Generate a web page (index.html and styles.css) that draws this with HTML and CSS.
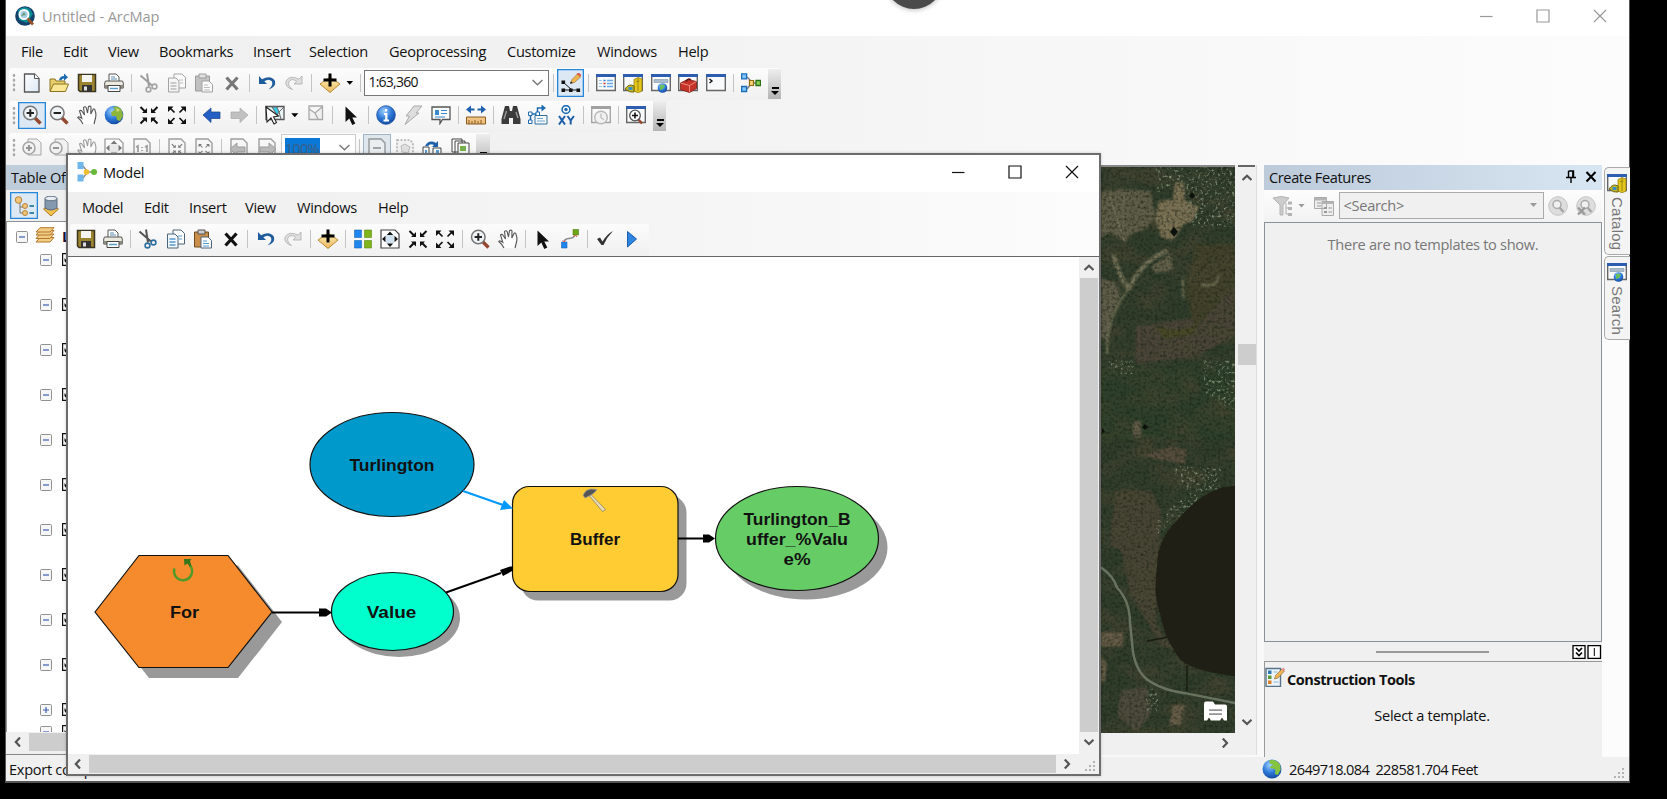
FILE: index.html
```html
<!DOCTYPE html>
<html lang="en">
<head>
<meta charset="utf-8">
<title>Untitled - ArcMap</title>
<link rel="stylesheet" href="styles.css">
</head>
<body>
<svg class="defs" width="0" height="0">
<defs>
<linearGradient id="gGold" x1="0" y1="0" x2="0" y2="1"><stop offset="0" stop-color="#fff0b8"/><stop offset="1" stop-color="#e8b85c"/></linearGradient>
<radialGradient id="gBlue" cx=".4" cy=".3" r=".8"><stop offset="0" stop-color="#9fd0ff"/><stop offset=".5" stop-color="#2d79d8"/><stop offset="1" stop-color="#0d3f93"/></radialGradient>
<linearGradient id="gSheet" x1="0" y1="0" x2="1" y2="1"><stop offset="0" stop-color="#fff"/><stop offset="1" stop-color="#dbe8f4"/></linearGradient>
<filter id="terrain" x="0" y="0" width="100%" height="100%" color-interpolation-filters="sRGB"><feTurbulence type="fractalNoise" baseFrequency=".03 .05" numOctaves="5" seed="8"/><feColorMatrix values="0 0 0 0 .29  0 0 0 0 .28  0 0 0 0 .20  2 1.200 0 0 -1.350"/></filter>
<filter id="grain" x="0" y="0" width="100%" height="100%" color-interpolation-filters="sRGB"><feTurbulence type="fractalNoise" baseFrequency=".35" numOctaves="3" seed="3"/><feColorMatrix values="0 0 0 0 .08  0 0 0 0 .12  0 0 0 0 .07  0 2 0 0 -.85"/></filter>
<filter id="specks" x="0" y="0" width="100%" height="100%" color-interpolation-filters="sRGB"><feTurbulence type="fractalNoise" baseFrequency=".35" numOctaves="2" seed="5"/><feColorMatrix values="0 0 0 0 .52  0 0 0 0 .57  0 0 0 0 .47  4 0 0 0 -2.200"/><feComposite in2="SourceGraphic" operator="in"/></filter>
<filter id="soft"><feGaussianBlur stdDeviation="1.2"/></filter>

<symbol id="new" viewBox="0 0 20 20"><path d="M2.500 1h10l4.500 4.500V19H2.500z" fill="url(#gSheet)" stroke="#555" stroke-width="1.300"/><path d="M12.500 1v4.500H17" fill="#fff" stroke="#555"/></symbol>
<symbol id="open" viewBox="0 0 20 20"><path d="M1 18V6h5l1 2h9v3" fill="#e8cf6a" stroke="#8a7420"/><path d="M1 18.500 4.500 11H19.500l-3 7.500z" fill="#fbe694" stroke="#8a7420"/><path d="M10 7q1-4 5-4V.5l4 3.700-4 3.500V5.500q-2 0-3 2z" fill="#1d6bb0"/></symbol>
<symbol id="save" viewBox="0 0 20 20"><path d="M1.500 1.500h17v17H3l-1.500-1.500z" fill="#9b8430" stroke="#3c3520" stroke-width="1.500"/><path d="M5 2h10v7H5z" fill="#f4f4f0"/><path d="M5 12h10v6.500H5z" fill="#333"/><path d="M7 13.500h3v4H7z" fill="#ddd"/></symbol>
<symbol id="print" viewBox="0 0 20 20"><path d="M5 8V1h7l3 3v4" fill="#fff" stroke="#555"/><path d="M7 4h4M7 6h6" stroke="#5a8cb4"/><path d="M1.500 8h17l.8 2v5H.7v-5z" fill="#ece9de" stroke="#555"/><path d="M.7 12h18.600v3.500H.7z" fill="#8c8a80"/><path d="M4 12.500h12v6H4z" fill="#fff" stroke="#444"/><path d="M6 15.500h8" stroke="#5a9bc9" stroke-width="1.500"/></symbol>
<symbol id="cut" viewBox="0 0 20 20"><path d="M1.500 2.500 13 12.500M8 .5l2 13" stroke="#555" stroke-width="2" fill="none"/><circle cx="9.500" cy="16.500" r="2.400" fill="none" stroke="#2d6f9f" stroke-width="1.600"/><circle cx="15.500" cy="13.500" r="2.400" fill="none" stroke="#2d6f9f" stroke-width="1.600"/></symbol>
<symbol id="copy" viewBox="0 0 20 20"><path d="M7 1h8l3.500 3.500V15H7z" fill="#fff" stroke="#4c6478"/><path d="M1.500 5H9l3 3v11H1.500z" fill="#f1f7fc" stroke="#4c6478"/><path d="M3.500 10h6M3.500 13h6M3.500 16h6" stroke="#5799cf" stroke-width="1.500"/><path d="M12 7h4M13 10h3" stroke="#5799cf"/></symbol>
<symbol id="paste" viewBox="0 0 20 20"><path d="M1.500 3h14v15h-14z" fill="#c98f4a" stroke="#6e4a1c"/><path d="M5 1h7v4H5z" fill="#ccc" stroke="#555"/><path d="M8 8h7l3.500 3.500V19H8z" fill="#fff" stroke="#4c6478"/><path d="M10 12h4M10 14.500h6M10 17h6" stroke="#5799cf"/></symbol>
<symbol id="del" viewBox="0 0 20 20"><path d="M4.500 4.500l11 12M15.500 4.500l-11 12" stroke="#111" stroke-width="3.200"/></symbol>
<symbol id="undo" viewBox="0 0 20 20"><path d="M2 3v8h8L7.300 8.300q4.500-3.300 7.500 0 2.200 4-3.300 8.200 8-2.500 6.500-8.500-4-6.500-13-1.800z" fill="#1e5c9c"/></symbol>
<symbol id="redo" viewBox="0 0 20 20"><g transform="matrix(-1 0 0 1 20 0)"><path d="M2 3v8h8L7.300 8.300q4.500-3.300 7.500 0 2.200 4-3.300 8.200 8-2.500 6.500-8.500-4-6.500-13-1.800z" fill="#d4d4d4" stroke="#999" stroke-width=".9"/></g></symbol>
<symbol id="add" viewBox="0 0 20 20"><path d="M0 11 10 4l10 7-10 8.500z" fill="url(#gGold)" stroke="#b98a34"/><path d="M10 .5v13M3.500 7h13" stroke="#000" stroke-width="3"/></symbol>
<symbol id="edit" viewBox="0 0 20 20"><path d="M2.500 9.500 11 17H3M11 17h7" fill="none" stroke="#111"/><path d="M.5 7.500h3.600v3.600H.5zM.5 15.500h3.600v3.600H.5zM8 15.500h3.600v3.600H8zM15.500 15.500h3.600v3.600h-3.600z" fill="#111"/><path d="M9.500 10l1.500-3.500 6-6L20 3.500l-6.500 6z" fill="#f0b64e" stroke="#8d6a30" stroke-width=".6"/><path d="m15.500 1 1.800-1.800L20.500 2l-1.700 1.800z" fill="#d75f50"/><path d="m9 11 1-2.800 1.800 1.800z" fill="#222"/></symbol>
<symbol id="win" viewBox="0 0 20 20"><path d="M.7 2h18.600v15.500H.7z" fill="#f8fafc" stroke="#666" stroke-width="1.400"/><path d="M0 1h20v3H0z" fill="#2c5db0"/></symbol>
<symbol id="toc" viewBox="0 0 20 20"><use href="#win"/><path d="M3 7.500h3M3 10.500h3M3 13.500h3" stroke="#9cc5ec"/><path d="M7.500 7.500h2M7.500 13.500h2" stroke="#2c78d0" stroke-width="1.500"/><path d="M11 7.500h6M11 10.500h6M11 13.500h6" stroke="#68a9e6" stroke-width="1.500"/><path d="M7.500 10.500h2" stroke="#d33" stroke-width="1.500"/></symbol>
<symbol id="catalog" viewBox="0 0 20 20"><use href="#win"/><path d="M11 6.500l4-2 4 1.500v12l-4 1.800-4-1.800z" fill="#e3c51c" stroke="#8a760a" stroke-width=".7"/><path d="M13 8.500l3.500-.5M15 5v13" stroke="#8e7a0c" stroke-width=".8"/><path d="M2 16q4-6 9-3v6q-4 1-9-3z" fill="#c6ba20" stroke="#6d6513"/><path d="M5.500 14h4v3h-4z" fill="#368dc9"/></symbol>
<symbol id="searchw" viewBox="0 0 20 20"><use href="#win"/><path d="M3 6.500h14v3H3z" fill="#a9bccb" stroke="#8496a4" stroke-width=".6"/><circle cx="11.500" cy="15" r="4.800" fill="url(#gBlue)"/><path d="M9 12q4-1 5 1l-2 3-3 1z" fill="#67bf5c"/></symbol>
<symbol id="toolbox" viewBox="0 0 20 20"><use href="#win"/><path d="m2.500 10 7-3.500 9 2v7l-7 4-9-3z" fill="#c53328" stroke="#7c1a12" stroke-width=".8"/><path d="m2.500 10 9 2.500 7-4M11.500 12.500V19" fill="none" stroke="#f08a7e"/><path d="M8 8.500q2-4 5-1.500" fill="none" stroke="#5b1410" stroke-width="1.500"/></symbol>
<symbol id="python" viewBox="0 0 20 20"><use href="#win"/><path d="m3.500 6 2.500 2-2.500 2" fill="none" stroke="#111" stroke-width="1.400"/></symbol>
<symbol id="model" viewBox="0 0 20 20"><path d="M6 4l4 4M6 16l4-5M13 10h3" stroke="#777" stroke-width="1.300"/><path d="M.6.900h5v5h-5zM.6 13.500h5v5h-5z" fill="#7fc4fa" stroke="#1c6cb8" stroke-width="1.300"/><path d="M8.500 7.500h4v5h-4z" fill="#f6d77a" stroke="#8f6c10" stroke-width="1.200"/><path d="M15 7.500h4.500v5H15z" fill="#8bd15c" stroke="#2b7018" stroke-width="1.300"/></symbol>
<symbol id="modelr" viewBox="0 0 20 20"><path d="M6 4l4 5M6 16l4-5M12 10h4" stroke="#888" stroke-width="1.300"/><path d="M.5 0h6v7h-6zM.5 12.500h6v7h-6z" fill="#6fb6ea"/><circle cx="9.500" cy="10" r="2.800" fill="#f0c02e"/><circle cx="17" cy="10" r="3" fill="#69b83c"/></symbol>
<symbol id="zin" viewBox="0 0 20 20"><path d="m13 13 5.500 5.500" stroke="#94472e" stroke-width="3.400"/><circle cx="8.300" cy="8" r="6.800" fill="#f1f4f6" stroke="#777" stroke-width="1.500"/><path d="M8.300 4.300v7.400M4.600 8H12" stroke="#222" stroke-width="2"/></symbol>
<symbol id="zout" viewBox="0 0 20 20"><path d="m13 13 5.500 5.500" stroke="#94472e" stroke-width="3.400"/><circle cx="8.300" cy="8" r="6.800" fill="#f1f4f6" stroke="#777" stroke-width="1.500"/><path d="M4.600 8H12" stroke="#222" stroke-width="2"/></symbol>
<symbol id="hand" viewBox="0 0 20 20"><path d="M6 19Q4 15 .8 12.500q1-1.500 4 .8L2.500 6q1.500-1.500 2.700.5L7.500 10 6.500 2.500Q8 .8 9.200 2.700L10.500 8l1-6.500q1.800-1 2.500.5L13.800 9l2.500-5q1.800-.4 1.700 1.500Q19.500 9 18.500 13l-1.500 6" fill="#fff" stroke="#555" stroke-width="1.100"/></symbol>
<symbol id="globe" viewBox="0 0 20 20"><circle cx="10" cy="10" r="9.300" fill="url(#gBlue)"/><path d="M9 2q6-2 9 4l1 5-3 5-3-1-1-4-4 0-1-4 4-2z" fill="#8db63a"/><path d="m12 3 4 2-3 2z" fill="#d6dd7e"/></symbol>
<symbol id="globe2" viewBox="0 0 20 20"><circle cx="10" cy="10" r="9.500" fill="url(#gBlue)"/><path d="M7 1.500q7-2 11 4l.8 5-3 5.500-3-1q1-3 0-5l-5-1 1-2 3-1-4-1.500z" fill="#86c440"/></symbol>
<symbol id="shrink" viewBox="0 0 20 20"><path d="M1.500 2 6 6.500M18.500 2 14 6.500M1.500 18.500 6 14M18.500 18.500 14 14" stroke="#111" stroke-width="2"/><path d="M8 8H3l5-5zM12 8h5l-5-5zM8 12.500H3l5 5zM12 12.500h5l-5 5z" fill="#111"/></symbol>
<symbol id="grow" viewBox="0 0 20 20"><path d="m3 3 4.500 4.500M17 3l-4.500 4.500M3 17.500 7.500 13M17 17.500 12.500 13" stroke="#111" stroke-width="1.700"/><path d="M1 1.500h5.500L1 7zM19 1.500h-5.500L19 7zM1 19h5.500L1 13.500zM19 19h-5.500l5.500-5.500z" fill="#111"/></symbol>
<symbol id="back" viewBox="0 0 20 20"><path d="m1 10 8-7v4h9v6.500H9v4z" fill="#2460c4" stroke="#17408a" stroke-width=".7"/></symbol>
<symbol id="fwd" viewBox="0 0 20 20"><path d="m19 10-8-7v4H2v6.500h9v4z" fill="#aaa" stroke="#888" stroke-width=".7"/></symbol>
<symbol id="selfeat" viewBox="0 0 20 20"><path d="M1 1.500h18v13H1z" fill="#eaf4f6" stroke="#555" stroke-width="1.300"/><path d="M7 2h5l2 5-2 3z" fill="#37cbe9" stroke="#666"/><path d="M19 2l-5 5 2 7" fill="none" stroke="#666"/><path d="m1 2 1 15 4-4 3 6 2.500-1.500-3-5.500 5-1z" fill="#fff" stroke="#222" stroke-width="1.100"/></symbol>
<symbol id="clear" viewBox="0 0 20 20"><path d="M3 1h13.500v13.500H3zM3 4l6 4 7-6M9 8l3 6" fill="#eee" stroke="#888" stroke-width="1.300"/></symbol>
<symbol id="cursor" viewBox="0 0 20 20"><path d="M4.500 1.500v15.500l3.800-3.500 3 6.500 3-1.500-3-6H16z" fill="#111"/></symbol>
<symbol id="info" viewBox="0 0 20 20"><circle cx="10" cy="10" r="9.300" fill="url(#gBlue)" stroke="#1c4f9f" stroke-width=".8"/><path d="M10 4v2.600M8 9h2.300v6.500M7.500 15.500h5.500" stroke="#fff" stroke-width="2.200" fill="none"/></symbol>
<symbol id="bolt" viewBox="0 0 20 20"><path d="M11 1h8l-6 7h3L2 19.500 6.500 11H3z" fill="#ddd" stroke="#aaa"/></symbol>
<symbol id="popup" viewBox="0 0 20 20"><path d="M1 2h18v12.500h-7.500L9 18.500v-4H1z" fill="#f7fbfe" stroke="#555" stroke-width="1.300"/><path d="M4 5h4v5H4z" fill="#3988d0"/><path d="M10 5.500h6M10 8.500h6M4 12h10" stroke="#3988d0"/></symbol>
<symbol id="measure" viewBox="0 0 20 20"><path d="m0 4.500 5-4v3h3.500v2H5v3zM20 4.500l-5-4v3h-3.500v2H15v3z" fill="#1d5fa8"/><path d="M.5 12h19v7H.5z" fill="#efc27f" stroke="#8a5a22"/><path d="M3 15v4M6 16v3M9 15v4M12 16v3M15 15v4" stroke="#8a5a22"/></symbol>
<symbol id="find" viewBox="0 0 20 20"><path d="M4 1h4l1 5h2l1-5h4l3.500 13v5H12v-6H8v6H.5v-5z" fill="#3b3b3b"/><path d="M3 14l2.500-8M15 7l2 6" stroke="#999" stroke-width="1.400"/></symbol>
<symbol id="route" viewBox="0 0 20 20"><path d="M2.500 17V9h7V3h6" fill="none" stroke="#1d6bb0" stroke-width="1.500"/><path d="m13.500-.5 4.500 3.500-4.500 3.500z" fill="#1d6bb0"/><path d="M.5 7h3.500v3.500H.5zM.5 15H4v3.500H.5zM8 7h3.500v3.500H8z" fill="#fff" stroke="#1d6bb0"/><path d="M7 10.500h12V19H7z" fill="#f5f9fc" stroke="#2d6f9f"/><path d="M9 13.500h6M9 16h8" stroke="#6ea4cb"/></symbol>
<symbol id="xy" viewBox="0 0 20 20"><circle cx="10" cy="4.500" r="3.900" fill="#fff" stroke="#1d6bb0" stroke-width="1.600"/><circle cx="10" cy="4.500" r="1.700" fill="#1d6bb0"/><path d="m3 11 6 8.500M9 11l-6 8.500M11.500 11l3.200 4.500 3.200-4.500M14.700 15v4.500" stroke="#1d5fa8" stroke-width="2" fill="none"/></symbol>
<symbol id="time" viewBox="0 0 20 20"><use href="#win"/><circle cx="10" cy="12.500" r="6.300" fill="#eee" stroke="#888" stroke-width="1.400"/><path d="M10 8.500v4.500l3 1.500" stroke="#777" fill="none"/></symbol>
<symbol id="viewer" viewBox="0 0 20 20"><use href="#win"/><path d="m12 14 4 4.500" stroke="#94472e" stroke-width="2.600"/><circle cx="9" cy="10.500" r="5.300" fill="#fff" stroke="#555" stroke-width="1.300"/><path d="M9 7.500v6M6 10.500h6" stroke="#111" stroke-width="1.600"/></symbol>
<symbol id="pzoom" viewBox="0 0 20 20"><path d="M6 1h9l4 4v12H6z" fill="#eee" stroke="#666"/><circle cx="7" cy="10" r="6" fill="#eee" stroke="#666" stroke-width="1.600"/><path d="M7 7v6M4 10h6" stroke="#444" stroke-width="2"/></symbol>
<symbol id="pzoomo" viewBox="0 0 20 20"><path d="M6 1h9l4 4v12H6z" fill="#eee" stroke="#666"/><circle cx="7" cy="10" r="6" fill="#eee" stroke="#666" stroke-width="1.600"/><path d="M4 10h6" stroke="#444" stroke-width="2"/></symbol>
<symbol id="page" viewBox="0 0 20 20"><path d="M2 1h12l4 4v14H2z" fill="#f6f6f6" stroke="#555" stroke-width="1.400"/></symbol>
<symbol id="pageall" viewBox="0 0 20 20"><path d="M1 1h14l4 4v14H1z" fill="#fff" stroke="#444" stroke-width="1.200"/><path d="M6 6h8v8H6z" fill="#cfe2ef"/><path d="m10 2.500 3.200 3.500H6.800zM10 18 6.800 14.500h6.400zM2 10l3.500-3.200v6.400zM18 10l-3.500-3.200v6.400z" fill="#111"/></symbol>
<symbol id="p11" viewBox="0 0 20 20"><use href="#page"/><path d="M4 9l2-1v6M10 9v1M10 12v1M13 9l2-1v6" fill="none" stroke="#555" stroke-width="1.700"/></symbol>
<symbol id="pshrink" viewBox="0 0 20 20"><use href="#page"/><use href="#shrink" x="4" y="5" width="12" height="12"/></symbol>
<symbol id="pgrow" viewBox="0 0 20 20"><use href="#page"/><use href="#grow" x="4" y="5" width="12" height="12"/></symbol>
<symbol id="pback" viewBox="0 0 20 20"><use href="#page"/><path d="m1 11 7-6v4h8v5H8v4z" fill="#888" stroke="#555"/></symbol>
<symbol id="pfwd" viewBox="0 0 20 20"><use href="#page"/><path d="m19 11-7-6v4H3v5h9v4z" fill="#888" stroke="#555"/></symbol>
<symbol id="pdraft" viewBox="0 0 20 20"><use href="#page"/><path d="M6 10h8" stroke="#555" stroke-width="1.700"/></symbol>
<symbol id="pfocus" viewBox="0 0 20 20"><path d="M2 2h13l3 3v14H2z" fill="#eee" stroke="#777" stroke-width="1.600" stroke-dasharray="2 1.500"/><path d="m6 8 4-2 5 3-2 6-6-1z" fill="#ccc" stroke="#888"/></symbol>
<symbol id="pchange" viewBox="0 0 20 20"><path d="M3 8q4-7 11-3l2-2v6h-6l2-2q-4-2-6 1z" fill="#1d5fa8"/><path d="M1 9h6v11H1zM11 10h8v10h-8z" fill="#f5f9fc" stroke="#444"/><path d="M3 12h2v7H3zM14 12h3v7h-3z" fill="#5799cf"/></symbol>
<symbol id="pages" viewBox="0 0 20 20"><path d="M2 1h10v13H2zM5 3h10v13H5z" fill="#fff" stroke="#444"/><path d="M8 5h11v12H8z" fill="#f5f9fc" stroke="#444"/><path d="M10 8h6v5h-6z" fill="#77b04a"/><path d="M1 17h12v3H1z" fill="#333"/></symbol>
<symbol id="grid" viewBox="0 0 20 20"><path d="M1.500 1h7v7.500h-7zM1.500 11.500h7V19h-7z" fill="#1f86ee" stroke="#1767b8" stroke-width=".6"/><path d="M11.500 1h7v7.500h-7zM11.500 11.500h7V19h-7z" fill="#7fb51b" stroke="#5d8a10" stroke-width=".6"/></symbol>
<symbol id="connect" viewBox="0 0 20 20"><path d="M4 13q0-3 5-3.500t6-3.500" fill="none" stroke="#888" stroke-width="1.300"/><path d="M1.500 13h5.500v6H1.500z" fill="#1f86ee" stroke="#1767b8" stroke-width=".6"/><path d="M13 .5h5.500v5.500H13z" fill="#6ca716" stroke="#4d7c0b" stroke-width=".6"/><path d="M2.500 11.500 4 13l1.500-1.500M13.500 7.500l2-1.500 1.500 2" fill="none" stroke="#e8574c"/></symbol>
<symbol id="check" viewBox="0 0 20 20"><path d="m2 10 3-1.500 2.500 4Q12 5 18 2 12 8 8.500 16H6.500z" fill="#333"/></symbol>
<symbol id="play" viewBox="0 0 20 20"><path d="M5.500 2.500 14.500 10 5.500 18z" fill="#2f86e0" stroke="#1a5cae"/></symbol>
<symbol id="arc" viewBox="0 0 20 20"><circle cx="10" cy="10" r="9.800" fill="#15406a"/><path d="M3 4q6-5 12-1l3 5-6 9-8-3z" fill="#0a8a92"/><circle cx="9" cy="8.500" r="4.600" fill="#a9d0e4" stroke="#fff" stroke-width="1.800"/><path d="m12.500 12.500 5.500 6" stroke="#9b5324" stroke-width="2.600"/><path d="m6 10 3-4 2 3z" fill="#6a9f7a"/></symbol>
<symbol id="source" viewBox="0 0 20 20"><path d="M6 6v11h5M6 11h4" fill="none" stroke="#777"/><circle cx="4.500" cy="4" r="3.300" fill="#f2c479" stroke="#b58436"/><circle cx="11" cy="10" r="2.500" fill="#f2c479" stroke="#b58436"/><circle cx="11" cy="17" r="2.500" fill="#f2c479" stroke="#b58436"/><path d="M15.500 10h4.500M15.500 17h4.500" stroke="#3a87a8" stroke-width="2"/></symbol>
<symbol id="cyl" viewBox="0 0 20 20"><path d="m2.500 13 7.500-2 7.500 2-7.500 7z" fill="#f2c04d" stroke="#a97820"/><path d="M4 2.500v9.500q6 4 12 0V2.500z" fill="#8499b0" stroke="#5b6b7c"/><ellipse cx="10" cy="2.500" rx="6" ry="2.300" fill="#e7edf3" stroke="#5b6b7c"/></symbol>
<symbol id="layers" viewBox="0 0 20 16"><g fill="#f3cc83" stroke="#b0782d"><path d="M1 15 5 10.500h14L15 15z"/><path d="M1 11.500 5 7h14l-4 4.500z"/><path d="M1 8 5 3.500h14L15 8z"/><path d="M1 5 5 .7h14L15 5z"/></g></symbol>
<symbol id="funnel" viewBox="0 0 20 20"><path d="M0 2q8-3 16 0l-6 7v10H7V9z" fill="#ccc" stroke="#b4b4b4"/><path d="M13 7v11h2M13 12h2" stroke="#aaa" fill="none"/><path d="M15 5.500h4v3h-4zM15 11h4v3h-4zM15 17h4v3h-4z" fill="#b4b4b4"/></symbol>
<symbol id="tmpl" viewBox="0 0 20 20"><path d="M.5 1.500h12v11H.5zM8 5.500h11.500v14H8z" fill="#eee" stroke="#aaa"/><path d="M.5 2h12v2.500H.5zM8 6h11.500v2H8z" fill="#b4b4b4"/><path d="M10 11h3v2h-3zM10 15h3v2h-3z" fill="#999"/><path d="M14.500 12H18M14.500 16H18M3 7h4M3 10h4" stroke="#999"/></symbol>
<symbol id="rsearch" viewBox="0 0 20 20"><circle cx="10" cy="10" r="9.300" fill="#ddd" stroke="#c4c4c4"/><circle cx="9" cy="8.500" r="4" fill="#f0f0f0" stroke="#aaa" stroke-width="1.500"/><path d="m11.500 11.500 4 4.500" stroke="#a4a4a4" stroke-width="2.400"/></symbol>
<symbol id="rclear" viewBox="0 0 20 20"><use href="#rsearch"/><path d="m2 11.500 7 7M9 11.500l-7 7" stroke="#999" stroke-width="2.400"/></symbol>
<symbol id="ctools" viewBox="0 0 20 20"><path d="M1 1.500h14.500v18H1z" fill="#eef5fa" stroke="#567389" stroke-width="1.400"/><path d="M3 3.500h3.500V7H3z" fill="#2e79b8"/><path d="M3 8.500h3.500V12H3z" fill="#5b9a36"/><path d="M3 13.500h3.500V17H3z" fill="#d98028"/><path d="M8.500 5h4M8.500 15h5" stroke="#8fb8d6"/><path d="m9.500 12 1-3.500L17 2l2.500 2-6.500 7z" fill="#efb552" stroke="#856128" stroke-width=".6"/><path d="M16.500 2.500 18.500.500 20 2.500l-1.500 2z" fill="#e28c8c"/></symbol>
<symbol id="up" viewBox="0 0 10 10"><path d="M.5 7 5 2.800 9.500 7" fill="none" stroke="#555" stroke-width="2.200"/></symbol>
<symbol id="down" viewBox="0 0 10 10"><path d="M.5 2.800 5 7l4.500-4.200" fill="none" stroke="#555" stroke-width="2.200"/></symbol>
<symbol id="thin" viewBox="0 0 10 10"><path d="M.5 2.800 5 7l4.500-4.200" fill="none" stroke="#777" stroke-width="1.300"/></symbol>
<symbol id="left" viewBox="0 0 10 10"><path d="M7 .5 2.800 5 7 9.500" fill="none" stroke="#555" stroke-width="2.200"/></symbol>
<symbol id="right" viewBox="0 0 10 10"><path d="M2.800.5 7 5 2.800 9.500" fill="none" stroke="#555" stroke-width="2.200"/></symbol>
<symbol id="wmin" viewBox="0 0 14 14"><path d="M1 7.500h12.500" stroke="currentColor" stroke-width="1.200"/></symbol>
<symbol id="wmax" viewBox="0 0 14 14"><path d="M1 1h12v12H1z" fill="none" stroke="currentColor" stroke-width="1.200"/></symbol>
<symbol id="wclose" viewBox="0 0 14 14"><path d="m1 1 12 12M13 1 1 13" stroke="currentColor" stroke-width="1.200"/></symbol>
<symbol id="size" viewBox="0 0 11 11"><path d="M8 0h2v2H8zM4 4h2v2H4zM8 4h2v2H8zM0 8h2v2H0zM4 8h2v2H4zM8 8h2v2H8z" fill="#b4b4b4"/></symbol>
<symbol id="boxminus" viewBox="0 0 12 12"><rect x=".5" y=".5" width="11" height="11" rx="1" fill="#f6f6f6" stroke="#919191"/><path d="M3 6h6" stroke="#3f5fb5" stroke-width="1.200"/></symbol>
<symbol id="boxplus" viewBox="0 0 12 12"><rect x=".5" y=".5" width="11" height="11" rx="1" fill="#f6f6f6" stroke="#919191"/><path d="M3 6h6M6 3v6" stroke="#3f5fb5" stroke-width="1.200"/></symbol>
<symbol id="tick" viewBox="0 0 13 13"><path d="M.6.600h11.800v11.800H.6z" fill="#fff" stroke="#111" stroke-width="1.200"/><path d="m2.500 5 2.500 3L10 3v3L5 11 2.500 8z" fill="#111"/></symbol>
</defs>
</svg>

<div class="app">
  <header class="titlebar">
    <svg class="i"><use href="#arc"/></svg><span class="caption">Untitled - ArcMap</span>
    <span class="winbtns"><svg><use href="#wmin"/></svg><svg><use href="#wmax"/></svg><svg><use href="#wclose"/></svg></span>
  </header>
  <nav class="menu main-menu">
    <span style="width:42px">File</span><span style="width:45px">Edit</span><span style="width:51px">View</span><span style="width:94px">Bookmarks</span><span style="width:56px">Insert</span><span style="width:80px">Selection</span><span style="width:118px">Geoprocessing</span><span style="width:90px">Customize</span><span style="width:81px">Windows</span><span>Help</span>
  </nav>
  <div class="bars">
    <div class="bar"><i class="grip"></i>
      <b class="t"><svg><use href="#new"/></svg></b><b class="t"><svg><use href="#open"/></svg></b><b class="t"><svg><use href="#save"/></svg></b><b class="t"><svg><use href="#print"/></svg></b><i class="sep"></i>
      <b class="t off"><svg><use href="#cut"/></svg></b><b class="t off"><svg><use href="#copy"/></svg></b><b class="t off"><svg><use href="#paste"/></svg></b><b class="t off"><svg><use href="#del"/></svg></b><i class="sep"></i>
      <b class="t"><svg><use href="#undo"/></svg></b><b class="t pale"><svg><use href="#redo"/></svg></b><i class="sep"></i>
      <b class="t"><svg><use href="#add"/></svg></b><i class="drop"></i><i class="sep"></i>
      <span class="combo scale">1:63,360<svg><use href="#thin"/></svg></span><i class="sep"></i>
      <b class="t on"><svg><use href="#edit"/></svg></b><i class="sep"></i>
      <b class="t"><svg><use href="#toc"/></svg></b><b class="t"><svg><use href="#catalog"/></svg></b><b class="t"><svg><use href="#searchw"/></svg></b><b class="t"><svg><use href="#toolbox"/></svg></b><b class="t"><svg><use href="#python"/></svg></b><i class="sep"></i>
      <b class="t"><svg><use href="#model"/></svg></b><i class="more"></i>
    </div>
    <div class="bar"><i class="grip"></i>
      <b class="t on"><svg><use href="#zin"/></svg></b><b class="t"><svg><use href="#zout"/></svg></b><b class="t"><svg><use href="#hand"/></svg></b><b class="t"><svg><use href="#globe"/></svg></b><i class="sep"></i>
      <b class="t"><svg><use href="#shrink"/></svg></b><b class="t"><svg><use href="#grow"/></svg></b><i class="sep"></i>
      <b class="t"><svg><use href="#back"/></svg></b><b class="t pale"><svg><use href="#fwd"/></svg></b><i class="sep"></i>
      <b class="t"><svg><use href="#selfeat"/></svg></b><i class="drop"></i><b class="t pale"><svg><use href="#clear"/></svg></b><i class="sep"></i>
      <b class="t"><svg><use href="#cursor"/></svg></b><i class="sep"></i>
      <b class="t"><svg><use href="#info"/></svg></b><b class="t"><svg><use href="#bolt"/></svg></b><b class="t"><svg><use href="#popup"/></svg></b><i class="sep"></i>
      <b class="t"><svg><use href="#measure"/></svg></b><i class="sep"></i>
      <b class="t"><svg><use href="#find"/></svg></b><b class="t"><svg><use href="#route"/></svg></b><b class="t"><svg><use href="#xy"/></svg></b><i class="sep"></i>
      <b class="t off"><svg><use href="#time"/></svg></b><i class="sep"></i>
      <b class="t"><svg><use href="#viewer"/></svg></b><i class="more"></i>
    </div>
    <div class="bar"><i class="grip"></i>
      <b class="t off"><svg><use href="#pzoom"/></svg></b><b class="t off"><svg><use href="#pzoomo"/></svg></b><b class="t off"><svg><use href="#hand"/></svg></b><b class="t off"><svg><use href="#pageall"/></svg></b><b class="t off"><svg><use href="#p11"/></svg></b><i class="sep"></i>
      <b class="t off"><svg><use href="#pshrink"/></svg></b><b class="t off"><svg><use href="#pgrow"/></svg></b><i class="sep"></i>
      <b class="t off"><svg><use href="#pback"/></svg></b><b class="t off"><svg><use href="#pfwd"/></svg></b>
      <span class="combo pct"><em>100%</em><svg><use href="#thin"/></svg></span><i class="sep"></i>
      <b class="t on dim"><svg><use href="#pdraft"/></svg></b><b class="t off"><svg><use href="#pfocus"/></svg></b><b class="t"><svg><use href="#pchange"/></svg></b><b class="t"><svg><use href="#pages"/></svg></b><i class="more"></i>
    </div>
  </div>

  <main class="work">
    <section class="toc">
      <h2 class="dockhead">Table Of</h2>
      <div class="tocbar"><b class="t on"><svg><use href="#source"/></svg></b><b class="t"><svg><use href="#cyl"/></svg></b></div>
      <div class="tree">
        <p class="root"><svg class="bx"><use href="#boxminus"/></svg><svg class="lay"><use href="#layers"/></svg><strong>L</strong></p>
        <p><svg class="bx"><use href="#boxminus"/></svg><svg class="ck"><use href="#tick"/></svg></p>
        <p><svg class="bx"><use href="#boxminus"/></svg><svg class="ck"><use href="#tick"/></svg></p>
        <p><svg class="bx"><use href="#boxminus"/></svg><svg class="ck"><use href="#tick"/></svg></p>
        <p><svg class="bx"><use href="#boxminus"/></svg><svg class="ck"><use href="#tick"/></svg></p>
        <p><svg class="bx"><use href="#boxminus"/></svg><svg class="ck"><use href="#tick"/></svg></p>
        <p><svg class="bx"><use href="#boxminus"/></svg><svg class="ck"><use href="#tick"/></svg></p>
        <p><svg class="bx"><use href="#boxminus"/></svg><svg class="ck"><use href="#tick"/></svg></p>
        <p><svg class="bx"><use href="#boxminus"/></svg><svg class="ck"><use href="#tick"/></svg></p>
        <p><svg class="bx"><use href="#boxminus"/></svg><svg class="ck"><use href="#tick"/></svg></p>
        <p><svg class="bx"><use href="#boxminus"/></svg><svg class="ck"><use href="#tick"/></svg></p>
        <p class="short"><svg class="bx"><use href="#boxplus"/></svg><svg class="ck"><use href="#tick"/></svg></p>
        <p><svg class="bx"><use href="#boxminus"/></svg><svg class="ck"><use href="#tick"/></svg></p>
      </div>
      <div class="hscroll"><svg class="ar"><use href="#left"/></svg><i class="thumb"></i></div>
    </section>

    <section class="mapview">
      <svg class="map" viewBox="0 0 134 568" preserveAspectRatio="none">
        <rect width="134" height="568" fill="#303d2b"/>
        <g filter="url(#soft)">
          <path d="M35 160 100 150 134 120v50l-40 20-60 8z" fill="#4b4537"/>
          <path d="M95 78h39v40l-40 45-10-40z" fill="#42432b"/>
          <path d="M0 198h134v75H0z" fill="#2f402b"/>
          <path d="M15 325 50 325 60 345 55 460 75 485 60 480 30 430 20 385 8 380z" fill="#4a4436"/>
        </g>
        <rect width="134" height="568" filter="url(#terrain)" opacity=".75"/>
        <g filter="url(#soft)">
          <path d="M0 25 20 22 50 24 54 50 45 62 30 68 24 76 10 66 0 70z" fill="#5f5c46"/>
          <path d="M74 15 83 16 84 34 98 40 92 54 82 58 72 74 60 70 54 52 58 34 72 32z" fill="#7a6f53"/>
          <path d="M50 100 70 86 72 104 54 106z" fill="#625e48"/>
          <path d="M0 112l14 4 6 12-10 24-4 22-6-4z" fill="#5f5c49"/>
          <path d="M40 290 70 280 86 284 84 298 70 296z" fill="#574d3c"/>
          <path d="M0 467h22v14H0zM0 492l6 6-2 18H0zM72 540h12l-4 20h-12z" fill="#665c46"/>
          <path d="M20 525 46 522 50 548 36 568 16 550z" fill="#4e4b3b"/>
          <path d="M32 255h8v16h-8z" fill="#605a47"/>
          <path d="M56 160q20 8 40-2l-4 10-30 4z" fill="#474a28"/>
          <path d="M12 88l8 22 8 14M28 122Q40 95 66 84" fill="none" stroke="#77745a" stroke-width="4"/>
          <path d="M28 122Q5 150 6 188M82 112v20M100 118q18 4 17-10" fill="none" stroke="#77765a" stroke-width="2"/>
        </g>
        <path d="M23 28v36M9 30l14 44" fill="none" stroke="#7d7b60" stroke-width="1.500" opacity=".6"/>
        <path d="M53 0h81v60H92L84 30l-8-15-20 12zM100 194h34v50l-28-12zM8 194h25v14H8zM54 355l45-36 20-9-30 32-34 28zM70 300l50 2v22H80zM45 520h12v26H45z" fill="#fff" filter="url(#specks)"/>
        <rect width="134" height="568" filter="url(#grain)" opacity=".7"/>
        <path d="m73 60 4 5-4 5-4-5zM91 25l3 4-3 3-3-3zM44 258l3 3-3 3-3-3zM1 262l3 3-3 3z" fill="#0c110b"/>
        <path d="M134 320 120 322Q95 331 76 355 57 372 56 400 52 430 59 448 63 470 72 483q6 13 16 17 15 7 46 11z" fill="#201f16"/>
        <path d="M0 402q12 8 16 20 13 14 13 35l3 30q4 22 18 30 15 9 34 11l50 10" fill="none" stroke="#69725f" stroke-width="2.500"/>
        <path d="M46 476l20-4M86 500v26" fill="none" stroke="#181c12" stroke-width="1.500"/>
        <path d="M103 539q0-2.500 2-2.500h7l2 3h10q2 0 2 2v14l-3 0-2-3-2 3h-9l-2-3-2 3h-3z" fill="#fff"/><path d="M108 545h13M108 549h13" stroke="#444"/>
      </svg>
      <div class="vscroll"><svg class="ar"><use href="#up"/></svg><i class="thumb"></i><svg class="ar"><use href="#down"/></svg></div>
      <div class="maphs"><svg class="ar"><use href="#right"/></svg></div>
    </section>

    <section class="features">
      <h2 class="dockhead">Create Features<span class="headbtns"><svg viewBox="0 0 10 13"><path d="M2.500 1h5v6.500M2.500 7V1M6.800 1v6M0 7.500h10M5 7.500V13" fill="none" stroke="#000" stroke-width="1.400"/></svg><svg viewBox="0 0 10 13"><path d="m.5 2 9 9.500m0-9.500-9 9.500" stroke="#000" stroke-width="2"/></svg></span></h2>
      <div class="fbar"><svg><use href="#funnel"/></svg><i class="drop grey"></i><svg class="tm"><use href="#tmpl"/></svg><span class="fsearch">&lt;Search&gt;<i class="drop grey"></i></span><svg class="s1"><use href="#rsearch"/></svg><svg class="s2"><use href="#rclear"/></svg></div>
      <div class="fbox">There are no templates to show.</div>
      <div class="split"><i class="rule"></i><svg viewBox="0 0 30 14"><path d="M1 .7h12v12.600H1zM16 .7h12.500v12.600H16z" fill="#fff" stroke="#000" stroke-width="1.300"/><path d="m4 3 3 3 3-3M4 7.500l3 3 3-3" fill="none" stroke="#000" stroke-width="1.600"/><path d="M22.300 3v8" stroke="#000"/></svg></div>
      <div class="ctools"><h3><svg class="i"><use href="#ctools"/></svg>Construction Tools</h3><p>Select a template.</p></div>
    </section>
    <aside class="tabs">
      <div class="tab" style="height:88px"><svg><use href="#catalog"/></svg><span>Catalog</span></div>
      <div class="tab" style="height:84px"><svg><use href="#searchw"/></svg><span>Search</span></div>
    </aside>
  </main>
  <footer class="status"><span class="msg">Export comp</span><svg class="i"><use href="#globe2"/></svg><span class="coords">2649718.084&nbsp; 228581.704 Feet</span><svg class="sz"><use href="#size"/></svg></footer>
</div>

<div class="knob"></div>

<div class="window">
  <header class="titlebar"><svg class="i"><use href="#modelr"/></svg><span class="caption">Model</span>
    <span class="winbtns"><svg><use href="#wmin"/></svg><svg><use href="#wmax"/></svg><svg><use href="#wclose"/></svg></span></header>
  <nav class="menu"><span style="width:62px">Model</span><span style="width:45px">Edit</span><span style="width:56px">Insert</span><span style="width:52px">View</span><span style="width:81px">Windows</span><span>Help</span></nav>
  <div class="barwrap"><div class="bar">
    <b class="t"><svg><use href="#save"/></svg></b><b class="t"><svg><use href="#print"/></svg></b><i class="sep"></i>
    <b class="t"><svg><use href="#cut"/></svg></b><b class="t"><svg><use href="#copy"/></svg></b><b class="t"><svg><use href="#paste"/></svg></b><b class="t"><svg><use href="#del"/></svg></b><i class="sep"></i>
    <b class="t"><svg><use href="#undo"/></svg></b><b class="t pale"><svg><use href="#redo"/></svg></b><i class="sep"></i>
    <b class="t"><svg><use href="#add"/></svg></b><i class="sep"></i>
    <b class="t"><svg><use href="#grid"/></svg></b><b class="t"><svg><use href="#pageall"/></svg></b><b class="t"><svg><use href="#shrink"/></svg></b><b class="t"><svg><use href="#grow"/></svg></b><i class="sep"></i>
    <b class="t"><svg><use href="#zin"/></svg></b><b class="t"><svg><use href="#hand"/></svg></b><i class="sep"></i>
    <b class="t"><svg><use href="#cursor"/></svg></b><b class="t"><svg><use href="#connect"/></svg></b><i class="sep"></i>
    <b class="t"><svg><use href="#check"/></svg></b><b class="t"><svg><use href="#play"/></svg></b>
  </div></div>
  <div class="canvas">
    <svg class="diagram" viewBox="68 257 1011 496">
      <g fill="#999"><path d="M105 622 149 565.500h89L282 622l-44 56h-89z"/><ellipse cx="399" cy="618" rx="61" ry="39"/><rect x="521" y="495.500" width="165.500" height="105" rx="17"/><ellipse cx="806" cy="547.500" rx="81.500" ry="52"/></g>
      <g stroke="#111" stroke-width="1.200">
        <path d="M95 612 139 555.500h89L272 612l-44 55.500h-89z" fill="#f68b2e"/>
        <ellipse cx="392" cy="464.500" rx="82" ry="52" fill="#0099cc"/>
        <ellipse cx="392.500" cy="611.500" rx="61" ry="39" fill="#00ffcc"/>
        <rect x="512.500" y="486.500" width="165.500" height="105" rx="17" fill="#ffcc33"/>
        <ellipse cx="797" cy="538.500" rx="81.500" ry="52" fill="#66cc66"/>
      </g>
      <g stroke="#000" stroke-width="2" fill="#000"><path d="M272 612.500h48M678 538.500h26M446 592.500 501 573"/><path d="M319 608.500h7l6 4-6 4h-7zM703 534.500h6l6 4-6 4h-6zM500 570l10-3.500h3v4l-10 5.500z" stroke="none"/></g>
      <g stroke="#0099ff" stroke-width="2.200" fill="#0099ff"><path d="m463 491 40 14"/><path d="m504 500 9 8.500-13 1.500z" stroke="none"/></g>
      <path d="M174.500 568.500a9 9 0 1 0 15.500-3" fill="none" stroke="#4f9a28" stroke-width="2.500"/><path d="M184 559h7.500l-1.500 2 1.500 5-2 .5-2-3-3 2z" fill="#36761a"/>
      <path d="m591 494.500 14.500 15-3 2-13-15.500z" fill="#e8dcb8" stroke="#8d8365" stroke-width=".8"/><path d="M583 495q3-6 8-6l6 .5-3 3.500-3 2-4 2-2 1z" fill="#555" stroke="#999" stroke-width=".8"/>
      <g class="lab"><text x="184.500" y="617.500" textLength="29" lengthAdjust="spacingAndGlyphs">For</text><text x="392" y="471" textLength="85" lengthAdjust="spacingAndGlyphs">Turlington</text><text x="391.500" y="617.500" textLength="49.500" lengthAdjust="spacingAndGlyphs">Value</text><text x="595" y="544.500" textLength="50" lengthAdjust="spacingAndGlyphs">Buffer</text><text x="797" y="524.500" textLength="107" lengthAdjust="spacingAndGlyphs">Turlington_B</text><text x="797" y="544.500" textLength="102" lengthAdjust="spacingAndGlyphs">uffer_%Valu</text><text x="797" y="564.500" textLength="27" lengthAdjust="spacingAndGlyphs">e%</text></g>
    </svg>
    <div class="vscroll"><svg class="ar"><use href="#up"/></svg><i class="thumb"></i><svg class="ar"><use href="#down"/></svg></div>
    <div class="hscroll"><svg class="ar"><use href="#left"/></svg><i class="thumb"></i><svg class="ar"><use href="#right"/></svg></div>
    <div class="corner"><svg><use href="#size"/></svg></div>
  </div>
</div>
</body>
</html>
```
FILE: styles.css
```css
* { box-sizing: border-box; }
body { margin: 0; width: 1667px; height: 799px; background: #000; overflow: hidden; position: relative;
  font: 14.6px/20px "Open Sans", "Noto Sans", sans-serif; letter-spacing: -.3px; color: #111; }
svg { display: block; flex: none; overflow: visible; }
.defs { position: absolute; }
p, h2, h3 { margin: 0; font-size: inherit; font-weight: 400; }
.i { width: 20px; height: 20px; }

.app { margin-left: 5px; width: 1625px; height: 783px; display: flex; flex-direction: column;
  border: solid #555; border-width: 0 1px 2px 1px; background: linear-gradient(90deg, #efefef 0, #f2f2f2 40%, #f7f7f7 65%, #fcfcfc); }

/* window chrome */
.titlebar { height: 36px; flex: none; background: #fff; display: flex; align-items: center; padding: 0 22px 5px 9px; gap: 7px; }
.app > .titlebar .caption { color: #999; letter-spacing: -.1px; }
.winbtns { margin-left: auto; display: flex; gap: 43px; color: #999; }
.winbtns svg { width: 14px; height: 14px; }
.menu { height: 32px; flex: none; display: flex; align-items: center; padding: 0 0 2px 15px; }
.menu span { white-space: nowrap; }

/* toolbars */
.bars { height: 97px; flex: none; display: flex; flex-direction: column; align-items: flex-start; gap: 1px; padding-left: 3px; overflow: hidden; }
.bar { height: 31.500px; display: flex; align-items: center; padding-bottom: 2px; background: linear-gradient(#fcfcfc, #f0f0f0); border-radius: 3px; }
.grip { width: 9px; height: 19px; flex: none; background: radial-gradient(circle at 5px 2.500px, #aaa 1.300px, transparent 1.600px) 0 0 / 9px 4.800px; }
.t { width: 27.500px; height: 27.500px; flex: none; display: flex; align-items: center; justify-content: center; }
.t svg { width: 20px; height: 20px; }
.on { background: #dce9f5; box-shadow: inset 0 0 0 1.300px #2487da; }
.dim { box-shadow: inset 0 0 0 1px #9db4c8; background: #dfe6ec; }
.dim svg, .off svg { filter: grayscale(1); opacity: .55; }
.pale svg { opacity: .7; }
.sep { width: 7.600px; height: 18px; flex: none; background: linear-gradient(#c4c4c4, #c4c4c4) center / 1.300px 100% no-repeat; }
.drop { width: 13.500px; height: 4px; flex: none; background: #000; clip-path: polygon(3px 0, 10px 0, 6.500px 4px); }
.grey { background: #999; }
.combo { height: 26px; border: 1.500px solid #777; background: #fff; display: flex; align-items: center; justify-content: space-between; padding: 0 5px 0 4px; }
.combo svg { width: 11px; height: 11px; }
.scale { width: 185px; font-size: 14px; letter-spacing: -.75px; padding: 0 5px 1px 3px; }
.pct { width: 75px; border-color: #ccc; height: 27px; padding-left: 3px; }
.pct em { background: #0a78d7; color: #3d5f82; font-style: normal; padding-right: 1px; letter-spacing: -.7px; }
.more { width: 13.500px; height: 30px; margin: 0 0 -2px 3px; background: linear-gradient(#eee, #b4b4b4); position: relative; }
.more::before { content: ""; position: absolute; left: 4px; top: 18px; width: 7px; height: 2px; background: #000; }
.more::after { content: ""; position: absolute; left: 3px; top: 22px; border: solid transparent; border-width: 4.500px 4.500px 0; border-top-color: #000; }

/* work area */
.work { flex: 1; min-height: 0; display: grid; grid-template-columns: 1095px 156px 7px 338px 27px; }
.dockhead { height: 25px; line-height: 25px; padding-left: 5px; background: linear-gradient(90deg, #bccada, #d8e5f2); display: flex; white-space: nowrap; }
.features .dockhead { letter-spacing: -.4px; }
.toc .dockhead { background: #bfcddb; }
.toc { display: flex; flex-direction: column; min-height: 0; height: 590px; border-bottom: 1px solid #888; }
.tocbar { height: 32px; display: flex; align-items: center; padding-left: 4px; flex: none; border-bottom: 1px solid #8a8f9a; }
.tree { height: 510px; background: #fff; overflow: hidden; border-left: 1px solid #999; flex: none; }
.tree p { height: 45px; display: flex; padding: 8px 0 0 33px; }
.tree .root { height: 23px; padding: 8px 0 0 9px; }
.tree .short { height: 22px; }
.tree svg { margin-top: 1px; }
.tree .bx { width: 12px; height: 12px; }
.tree .ck { width: 13px; height: 13px; margin: 0 0 0 10px; }
.tree .lay { width: 20px; height: 16px; margin: -3px 7px 0 7px; }
.tree strong { line-height: 13px; color: #14143c; }
.hscroll { display: flex; align-items: center; background: #f0f0f0; }
.toc .hscroll { height: 19px; padding-left: 7px; }
.ar { width: 10px; height: 10px; }
.thumb { background: #cdcdcd; }
.toc .thumb { height: 18px; flex: 1; margin-left: 6px; }

.mapview { display: grid; grid-template: 569px 1fr / 137px 19px; background: #f0f0f0; height: 590px; border-right: 1px solid #ddd; }
.map { width: 134px; height: 568px; border-top: 2px solid #888; overflow: hidden; }
.mapview .vscroll { border-top: 2px solid #666; display: flex; flex-direction: column; align-items: center; padding: 6px 0 7px; justify-content: space-between; width: 17px; }
.mapview .thumb { width: 18px; height: 21px; margin: 0 0 192px; }
.mapview .maphs { display: flex; justify-content: flex-end; align-items: center; padding: 0 8px 3px; }

.features { grid-column: 4; display: flex; flex-direction: column; min-height: 0; }
.headbtns { margin-left: auto; display: flex; gap: 10px; padding: 5px 6px 0 0; }
.headbtns svg { width: 10px; height: 13px; }
.fbar { height: 32px; flex: none; display: flex; align-items: center; padding: 0 0 1px 9px; background: linear-gradient(#fdfdfd, #f2f2f2); }
.fbar svg { width: 20px; height: 20px; }
.fbar > .drop { margin: 0 5px 0 2px; }
.fsearch { width: 205px; height: 27px; margin-left: 5px; border: 1.500px solid #aaa; background: #f0f0f0; color: #777; display: flex; align-items: center; justify-content: space-between; padding: 0 2px 1px 4px; }
.s1 { margin: 0 8px 0 4px; }
.fbox { height: 420px; flex: none; border: 1.500px solid #8b909c; background: #f0f0f0; color: #777; text-align: center; padding-top: 11px; }
.split { height: 19px; flex: none; background: #f0f0f0; display: flex; align-items: center; padding: 1px 0 0 112px; justify-content: space-between; }
.rule { width: 113px; height: 1.500px; background: #999; }
.split svg { width: 30px; height: 14px; }
.ctools { flex: 1; background: #f0f0f0; border: solid #999; border-width: 1.500px 0 0 1.500px; }
.ctools h3 { font-weight: 700; display: flex; gap: 2px; padding-top: 5px; letter-spacing: -.45px; font-size: 14.500px; line-height: 25px; }
.ctools p { text-align: center; padding: 13px 3px 0 0; }
.tabs { padding: 2px 0 0 2px; }
.tab { border: 1.500px solid #aaa; border-right: 0; border-radius: 5px 0 0 5px; background: #f4f4f4; margin-bottom: 1px; padding: 5px 0 0 2px; width: 26px; }
.tab svg { width: 20px; height: 20px; }
.tab span { writing-mode: vertical-rl; font: 15px/18px "Liberation Sans", sans-serif; color: #777; letter-spacing: .25px; margin: 4px 0 0 1px; display: block; }

.status { height: 24px; flex: none; background: #f0f0f0; display: flex; align-items: center; gap: 7px; }
.msg { width: 1249px; padding-left: 3px; }
.coords { letter-spacing: -.65px; }
.sz { width: 11px; height: 11px; margin: 8px 4px 0 auto; }

.knob { position: absolute; left: 885px; top: -49px; width: 58px; height: 58px; border-radius: 50%; background: #4a4a4a; box-shadow: 0 1px 5px #0004; }

/* floating model window */
.window { position: absolute; left: 66px; top: 153px; width: 1035px; height: 623px; background: linear-gradient(90deg, #efefef, #f5f5f5 60%, #fcfcfc); border: 2px solid #6c6c6c; display: flex; flex-direction: column; box-shadow: 0 0 3px #0003; }
.window > .titlebar { height: 37px; padding: 0 20px 4px 9px; gap: 6px; }
.window .winbtns { color: #111; }
.window > .menu { padding: 0 0 2px 14px; }
.barwrap { height: 33px; flex: none; border-bottom: 1.500px solid #666; display: flex; padding-left: 2px; }
.barwrap .bar { padding: 0 3px 1px 2px; }
.barwrap .t { width: 27.500px; }
.barwrap .sep { width: 7.400px; }
.canvas { flex: 1; min-height: 0; display: grid; grid-template: 1fr 20px / 1fr 20px; background: #fff; }
.diagram { width: 1011px; height: 496px; }
.canvas .vscroll { background: #f0f0f0; display: flex; flex-direction: column; align-items: center; padding: 6px 0 7px; gap: 5px; }
.canvas .vscroll .thumb { width: 18px; flex: 1; }
.canvas .hscroll { padding: 0 7px 1px 5px; gap: 6px; }
.canvas .hscroll .thumb { height: 18px; flex: 1; }
.corner { background: #f0f0f0; padding: 7px 0 0 6px; }
.corner svg { width: 11px; height: 11px; }
.lab text { font: 700 17.300px "Liberation Sans", Arial, sans-serif; letter-spacing: 0; text-anchor: middle; fill: #111; }
```
